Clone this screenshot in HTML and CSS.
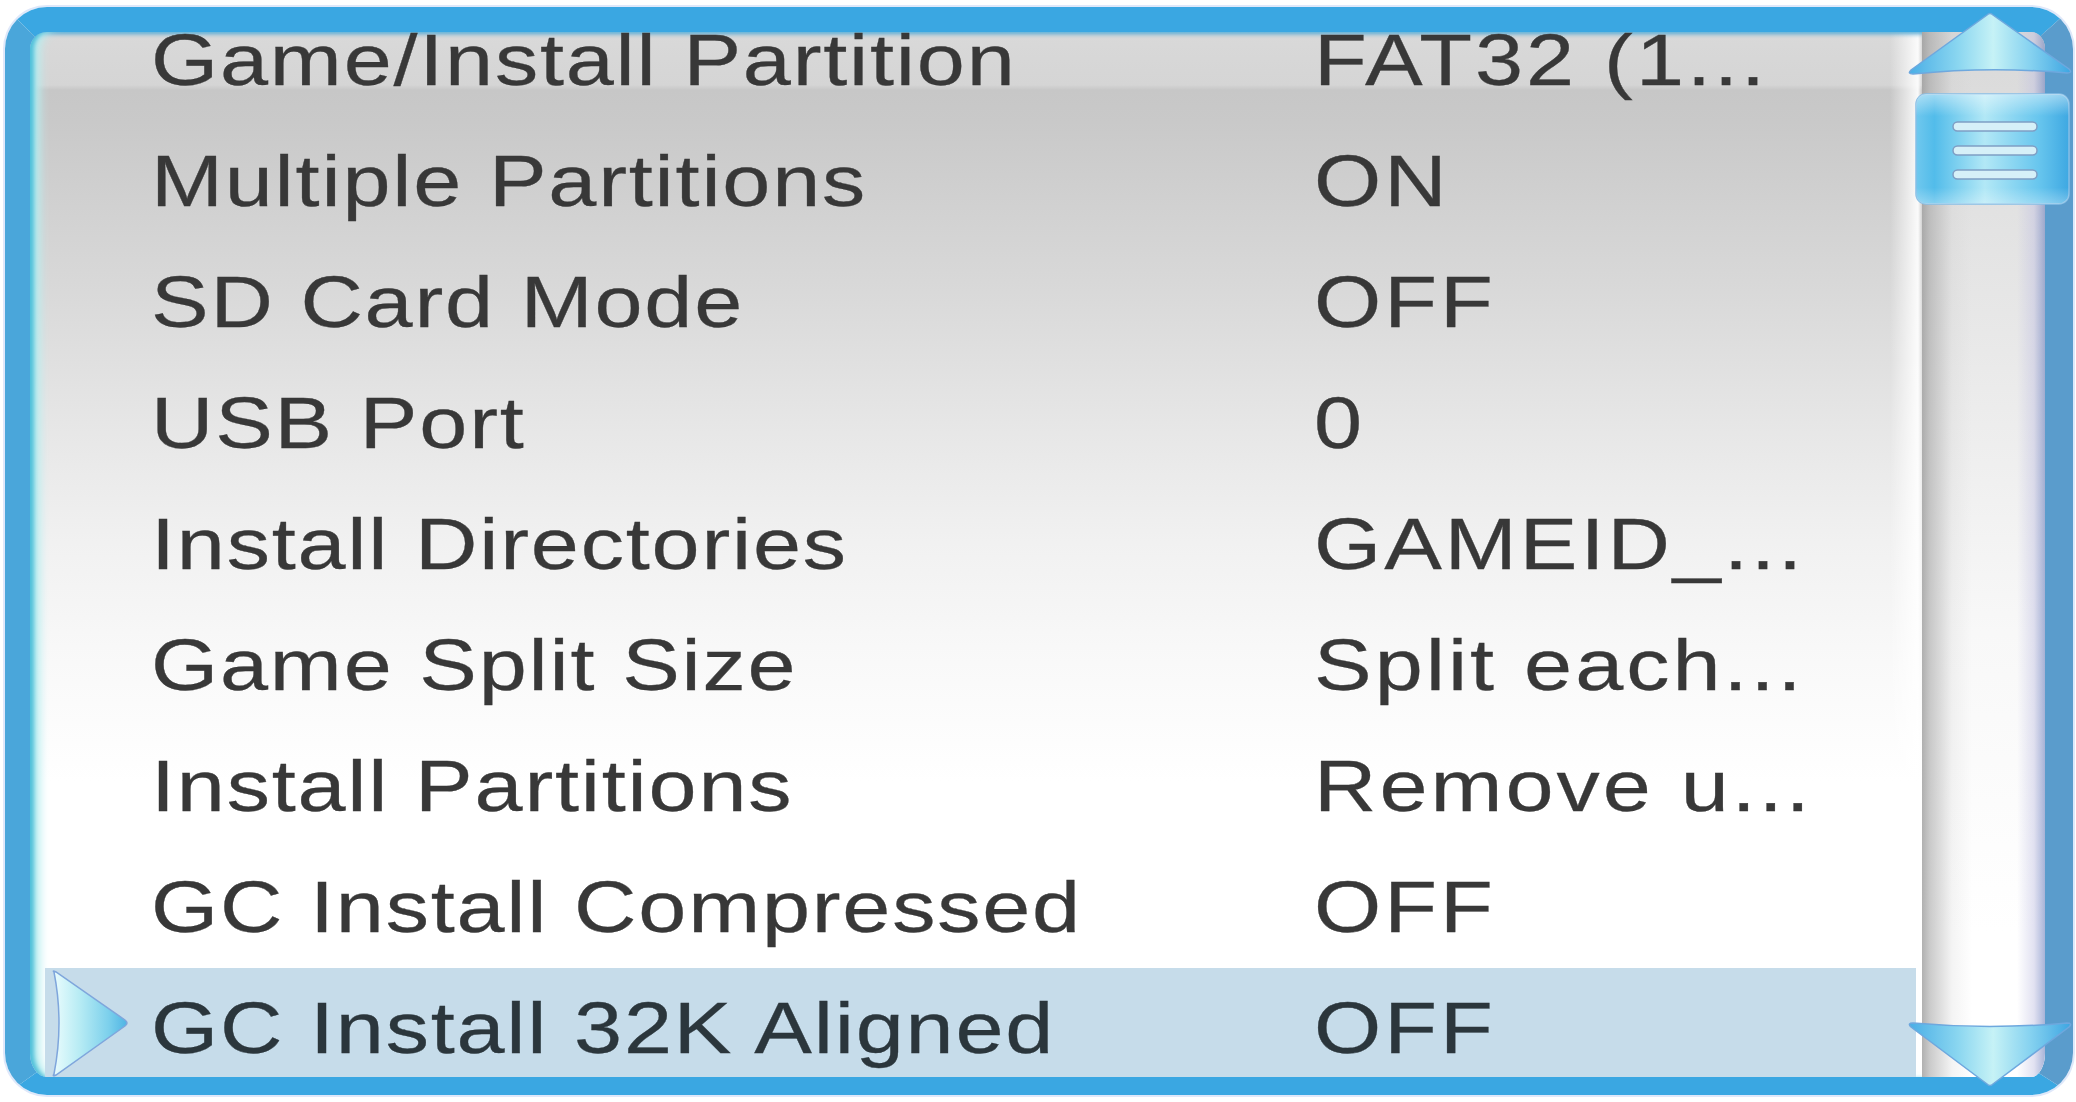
FILE: index.html
```html
<!DOCTYPE html>
<html>
<head>
<meta charset="utf-8">
<link rel="stylesheet" href="styles.css">
</head>
<body>
<div class="screen">
  <div class="panel">
    <div class="list">
      <div class="row"><span class="cursor"></span><span class="label">Game/Install Partition</span><span class="value">FAT32 (1...</span></div>
      <div class="row"><span class="cursor"></span><span class="label">Multiple Partitions</span><span class="value">ON</span></div>
      <div class="row"><span class="cursor"></span><span class="label">SD Card Mode</span><span class="value">OFF</span></div>
      <div class="row"><span class="cursor"></span><span class="label">USB Port</span><span class="value">0</span></div>
      <div class="row"><span class="cursor"></span><span class="label">Install Directories</span><span class="value">GAMEID_...</span></div>
      <div class="row"><span class="cursor"></span><span class="label">Game Split Size</span><span class="value">Split each...</span></div>
      <div class="row"><span class="cursor"></span><span class="label">Install Partitions</span><span class="value">Remove u...</span></div>
      <div class="row"><span class="cursor"></span><span class="label">GC Install Compressed</span><span class="value">OFF</span></div>
      <div class="row selected">
        <span class="cursor">
          <svg class="pointer" viewBox="0 0 78 107" width="78" height="107">
            <defs>
              <linearGradient id="pg" x1="0" y1="0" x2="1" y2="0">
                <stop offset="0" stop-color="#eafcfd"/>
                <stop offset="0.35" stop-color="#b8ecf4"/>
                <stop offset="0.75" stop-color="#7cd0ec"/>
                <stop offset="1" stop-color="#4fb4e4"/>
              </linearGradient>
            </defs>
            <path d="M4 2 Q2 0 6 2 L75 50 Q79 53 75 56 L6 105 Q2 107 4 104 Q14 53 4 2 Z" fill="url(#pg)" stroke="#7fa6dc" stroke-width="1.5"/>
          </svg>
        </span><span class="label">GC Install 32K Aligned</span><span class="value">OFF</span>
      </div>
    </div>
    <div class="track"></div>
  </div>

  <svg class="btn-up" viewBox="0 0 166 66" width="166" height="66">
    <defs>
      <linearGradient id="ug" x1="0" y1="0" x2="1" y2="0">
        <stop offset="0" stop-color="#4aaee6"/>
        <stop offset="0.3" stop-color="#8ad6f0"/>
        <stop offset="0.52" stop-color="#c6f2f6"/>
        <stop offset="0.75" stop-color="#86d2f0"/>
        <stop offset="1" stop-color="#3ea6e2"/>
      </linearGradient>
    </defs>
    <path d="M80 4 Q83 1 86 4 L162 58 Q166 62 160 62 Q83 55 6 63 Q0 63 4 59 Z" fill="url(#ug)" stroke="#6ea8de" stroke-width="1.5"/>
  </svg>

  <svg class="thumb" viewBox="0 0 155 112" width="155" height="112">
    <defs>
      <linearGradient id="tg" x1="0" y1="0" x2="1" y2="0">
        <stop offset="0" stop-color="#70c8ee"/>
        <stop offset="0.12" stop-color="#52bcea"/>
        <stop offset="0.45" stop-color="#b2e8f6"/>
        <stop offset="0.8" stop-color="#68c6ee"/>
        <stop offset="1" stop-color="#3ea8e2"/>
      </linearGradient>
      <linearGradient id="tv" x1="0" y1="0" x2="0" y2="1">
        <stop offset="0" stop-color="#ffffff" stop-opacity="0.45"/>
        <stop offset="0.2" stop-color="#ffffff" stop-opacity="0"/>
        <stop offset="0.85" stop-color="#ffffff" stop-opacity="0"/>
        <stop offset="1" stop-color="#ffffff" stop-opacity="0.3"/>
      </linearGradient>
    </defs>
    <rect x="1" y="1" width="153" height="110" rx="10" fill="url(#tg)" stroke="#86bfe6" stroke-width="1.5"/>
    <rect x="1" y="1" width="153" height="110" rx="10" fill="url(#tv)"/>
    <rect x="38" y="29" width="84" height="9" rx="4.5" fill="#d6f0f8" stroke="#7f9ec4" stroke-width="1.5"/>
    <rect x="38" y="53" width="84" height="9" rx="4.5" fill="#d6f0f8" stroke="#7f9ec4" stroke-width="1.5"/>
    <rect x="38" y="77" width="84" height="9" rx="4.5" fill="#d6f0f8" stroke="#7f9ec4" stroke-width="1.5"/>
  </svg>

  <svg class="btn-down" viewBox="0 0 166 68" width="166" height="68">
    <path d="M6 3 Q83 10 160 3 Q166 3 162 7 L86 64 Q83 67 80 64 L4 7 Q0 3 6 3 Z" fill="url(#ug)" stroke="#6ea8de" stroke-width="1.5"/>
  </svg>
</div>
</body>
</html>
```

FILE: styles.css
```css
* { box-sizing: border-box; }

html, body {
  margin: 0;
  padding: 0;
  background: #ffffff;
}

.screen {
  position: relative;
  width: 2076px;
  height: 1102px;
  padding: 7px 3px 7px 5px;
  background: #ffffff;
  overflow: hidden;
  font-family: "Liberation Sans", Arial, sans-serif;
}

.panel {
  height: 1088px;
  display: flex;
  border-style: solid;
  border-width: 25px 28px 18px 25px;
  border-top-color: #3aa7e2;
  border-left-color: #4aa6da;
  border-right-color: #5a9ccc;
  border-bottom-color: #3aa7e2;
  border-radius: 42px;
  overflow: hidden;
  box-shadow:
    0 0 0 2px #dfe8fa,
    inset 6px 0 4px -2px #4fbfda,
    inset 14px 0 10px -4px #b8eef0,
    inset 0 4px 4px -2px #4b9fd0;
  background:
    linear-gradient(to right, rgba(255,255,255,0) 1860px, rgba(255,255,255,0.9) 1888px, rgba(255,255,255,0) 1892px),
    linear-gradient(to bottom,
      #d9d9d9 0,
      #d5d5d5 53px,
      #c7c7c7 58px,
      #c9c9c9 90px,
      #d9d9d9 260px,
      #e6e6e6 390px,
      #f1f1f1 510px,
      #f9f9f9 630px,
      #ffffff 750px);
}

.list {
  flex: 0 0 1886px;
  margin-top: -32px;
  display: flex;
  flex-direction: column;
}

.row {
  height: 121px;
  flex: 0 0 121px;
  margin-left: 15px;
  padding-top: 0;
  display: grid;
  grid-template-columns: 106px 1163px 1fr;
  line-height: 121px;
  font-size: 72px;
  color: #383838;
  white-space: nowrap;
}

.row.selected {
  background: #c6dcea;
  color: #2b363c;
}

.label, .value {
  display: inline-block;
  letter-spacing: 1.5px;
  transform: scaleX(1.2);
  transform-origin: left center;
  -webkit-text-stroke: 0.3px currentColor;
}

.value {
  letter-spacing: 2.5px;
}

.cursor {
  display: block;
}

.pointer {
  display: block;
  margin-left: 5px;
  margin-top: 2px;
}

.track {
  flex: 0 0 123px;
  margin-left: 6px;
  background:
    linear-gradient(to right,
      rgba(150,150,150,0.75) 0,
      rgba(160,160,160,0.55) 8px,
      rgba(200,200,200,0.2) 30px,
      rgba(255,255,255,0) 50px,
      rgba(255,255,255,0) 95px,
      rgba(190,190,225,0.45) 112px,
      rgba(110,130,190,0.6) 123px),
    linear-gradient(to bottom, #d9d9d9 0, #e8e8e8 300px, #f8f8f8 600px, #ffffff 900px);
}

.btn-up {
  position: absolute;
  left: 1907px;
  top: 11px;
  display: block;
}

.thumb {
  position: absolute;
  left: 1915px;
  top: 93px;
  display: block;
}

.btn-down {
  position: absolute;
  left: 1907px;
  top: 1020px;
  display: block;
}
```
